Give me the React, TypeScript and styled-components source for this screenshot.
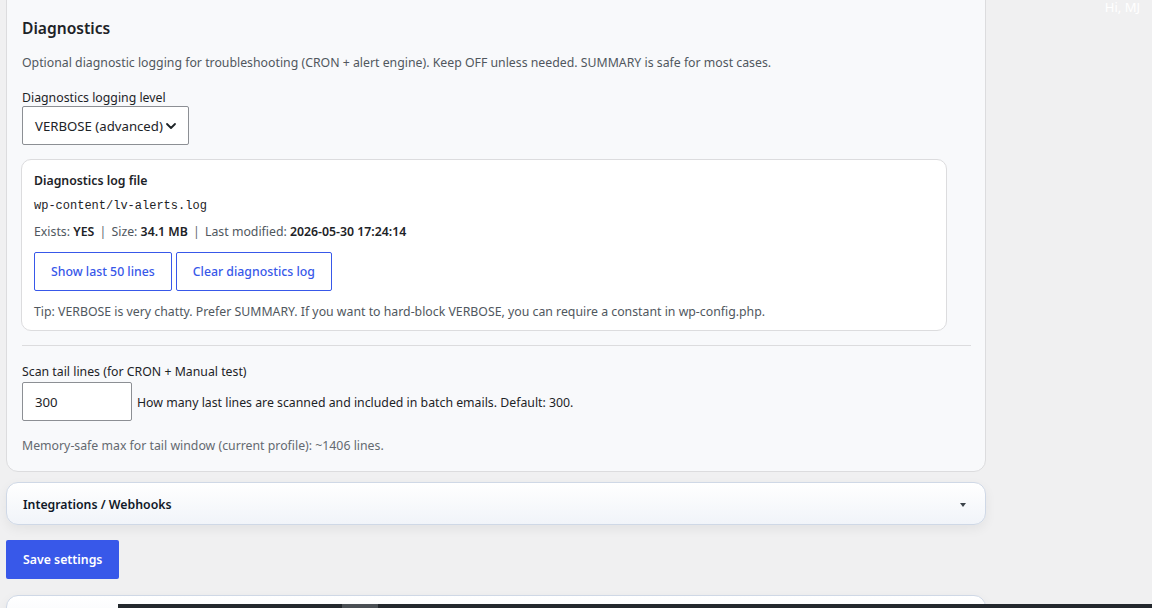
import { FC } from "react";
import styled, { createGlobalStyle } from "styled-components";
//
const GlobalStyle = createGlobalStyle`
  *, *::before, *::after {
    box-sizing: border-box;
  }
  html, body {
    margin: 0;
    padding: 0;
    background: #f0f0f1;
    overflow: hidden;
    height: 608px;
  }
  body {
    font-family: "Noto Sans", "Open Sans", Arial, sans-serif;
    font-size: 12.3px;
    color: #1d2327;
  }
`;
//
interface ButtonProps {
  label: string;
}
//
const OutlineButton: FC<ButtonProps> = ({ label }) => {
  return <Outline type="button">{label}</Outline>;
};
//
const Chevron: FC = () => (
  <svg width="12" height="12" viewBox="0 0 12 12" fill="none">
    <path d="M2 4l4 4 4-4" stroke="#1d2327" strokeWidth="1.8" strokeLinecap="round" strokeLinejoin="round" />
  </svg>
);
//
const App: FC = () => {
  return (
    <>
      <GlobalStyle />
      <Page>
        <Card>
          <Heading>Diagnostics</Heading>
          <Description>
            Optional diagnostic logging for troubleshooting (CRON + alert engine). Keep OFF unless needed. SUMMARY is
            safe for most cases.
          </Description>
          <Label>Diagnostics logging level</Label>
          <SelectBox>
            <span>VERBOSE (advanced)</span>
            <Chevron />
          </SelectBox>
          <LogCard>
            <LogTitle>Diagnostics log file</LogTitle>
            <Mono>wp-content/lv-alerts.log</Mono>
            <Meta>
              Exists: <b>YES</b> <Sep>|</Sep> Size: <b>34.1 MB</b> <Sep>|</Sep> Last modified:{" "}
              <b>2026-05-30 17:24:14</b>
            </Meta>
            <ButtonRow>
              <OutlineButton label="Show last 50 lines" />
              <OutlineButton label="Clear diagnostics log" />
            </ButtonRow>
            <Tip>
              Tip: VERBOSE is very chatty. Prefer SUMMARY. If you want to hard-block VERBOSE, you can require a constant
              in wp-config.php.
            </Tip>
          </LogCard>
          <Divider />
          <Label>Scan tail lines (for CRON + Manual test)</Label>
          <InputRow>
            <NumberInput>300</NumberInput>
            <Hint>How many last lines are scanned and included in batch emails. Default: 300.</Hint>
          </InputRow>
          <Muted>Memory-safe max for tail window (current profile): ~1406 lines.</Muted>
        </Card>
        <Accordion $gap={10}>
          <AccordionTitle>Integrations / Webhooks</AccordionTitle>
          <Caret />
        </Accordion>
        <SaveButton type="button">Save settings</SaveButton>
        <Accordion $gap={16} />
      </Page>
      <Greeting>Hi, MJ</Greeting>
      <ScrollStrip>
        <ScrollThumb />
      </ScrollStrip>
    </>
  );
};

export default App;

const Page = styled.div`
  width: 986px;
  padding-left: 6px;
  margin-top: -12px;
  display: flex;
  flex-direction: column;
  align-items: stretch;
`;

const Card = styled.div`
  background: #f8f9fb;
  border: 1px solid #dcdcde;
  border-radius: 12px;
  padding: 27px 15px 16px;
  display: flex;
  flex-direction: column;
`;

const Heading = styled.h2`
  margin: 0 0 14px;
  font-size: 15.6px;
  font-weight: 600;
  line-height: 24px;
  color: #1d2327;
`;

const Description = styled.p`
  margin: 0 0 18px;
  color: #50575e;
  line-height: 18px;
`;

const Label = styled.div`
  line-height: 16px;
`;

const SelectBox = styled.div`
  align-self: flex-start;
  display: flex;
  align-items: center;
  gap: 2px;
  height: 39px;
  padding: 0 11px 0 12px;
  background: #fff;
  border: 1px solid #8c8f94;
  border-radius: 2px;
  font-size: 13.2px;
  margin-bottom: 14px;
`;

const LogCard = styled.div`
  margin: 0 23px 0 -1px;
  background: #fff;
  border: 1px solid #dcdcde;
  border-radius: 10px;
  padding: 12px 12px 9px;
  display: flex;
  flex-direction: column;
`;

const LogTitle = styled.div`
  font-weight: 600;
  line-height: 18px;
  margin-bottom: 7px;
`;

const Mono = styled.code`
  font-family: "Liberation Mono", "DejaVu Sans Mono", monospace;
  font-size: 12px;
  line-height: 18px;
  margin-bottom: 8px;
`;

const Meta = styled.div`
  color: #50575e;
  line-height: 18px;
  margin-bottom: 11px;
  b {
    color: #1d2327;
    font-weight: 600;
  }
`;

const Sep = styled.span`
  margin: 0 2px;
  color: #646970;
`;

const ButtonRow = styled.div`
  display: flex;
  gap: 4px;
  margin-bottom: 12px;
`;

const Outline = styled.button`
  height: 39px;
  padding: 0 16px;
  background: #fff;
  border: 1px solid #3858e9;
  border-radius: 2px;
  color: #3858e9;
  font-family: inherit;
  font-size: 12.3px;
  font-weight: 500;
`;

const Tip = styled.div`
  color: #50575e;
  line-height: 18px;
`;

const Divider = styled.hr`
  border: 0;
  border-top: 1px solid #dcdcde;
  margin: 14px 0 18px;
  width: 949px;
`;

const InputRow = styled.div`
  display: flex;
  align-items: center;
  gap: 5px;
  margin-top: 2px;
`;

const NumberInput = styled.div`
  width: 110px;
  height: 39px;
  padding: 0 12px;
  display: flex;
  align-items: center;
  background: #fff;
  border: 1px solid #8c8f94;
  border-radius: 2px;
  font-size: 13.2px;
`;

const Hint = styled.span`
  margin-top: 2px;
`;

const Muted = styled.div`
  color: #646970;
  line-height: 18px;
  margin-top: 16px;
`;

const Accordion = styled.div<{ $gap?: number }>`
  margin-top: ${(p) => p.$gap ?? 12}px;
  height: 43px;
  flex-shrink: 0;
  border: 1px solid #cfd8e6;
  border-radius: 12px;
  background: linear-gradient(#ffffff, #f1f4f9);
  box-shadow: 0 4px 12px rgba(0, 0, 0, 0.06);
  display: flex;
  align-items: center;
  justify-content: space-between;
  padding: 2px 19px 0 16px;
`;

const AccordionTitle = styled.span`
  font-weight: 600;
  font-size: 12.3px;
  color: #101828;
`;

const Caret = styled.span`
  width: 0;
  height: 0;
  border-left: 3px solid transparent;
  border-right: 3px solid transparent;
  border-top: 4px solid #3c434a;
`;

const SaveButton = styled.button`
  align-self: flex-start;
  margin-top: 15px;
  height: 39px;
  padding: 0 17px;
  background: #3858e9;
  color: #fff;
  border: 0;
  border-radius: 2px;
  font-family: inherit;
  font-size: 12.3px;
  font-weight: 600;
`;

const Greeting = styled.div`
  position: absolute;
  top: 0;
  right: 12px;
  color: #fff;
  line-height: 15px;
  font-size: 13px;
`;

const ScrollStrip = styled.div`
  position: fixed;
  left: 118px;
  right: 0;
  bottom: 0;
  height: 4px;
  background: #23282d;
`;

const ScrollThumb = styled.div`
  margin-left: 224px;
  width: 36px;
  height: 4px;
  background: #4a4f54;
`;
